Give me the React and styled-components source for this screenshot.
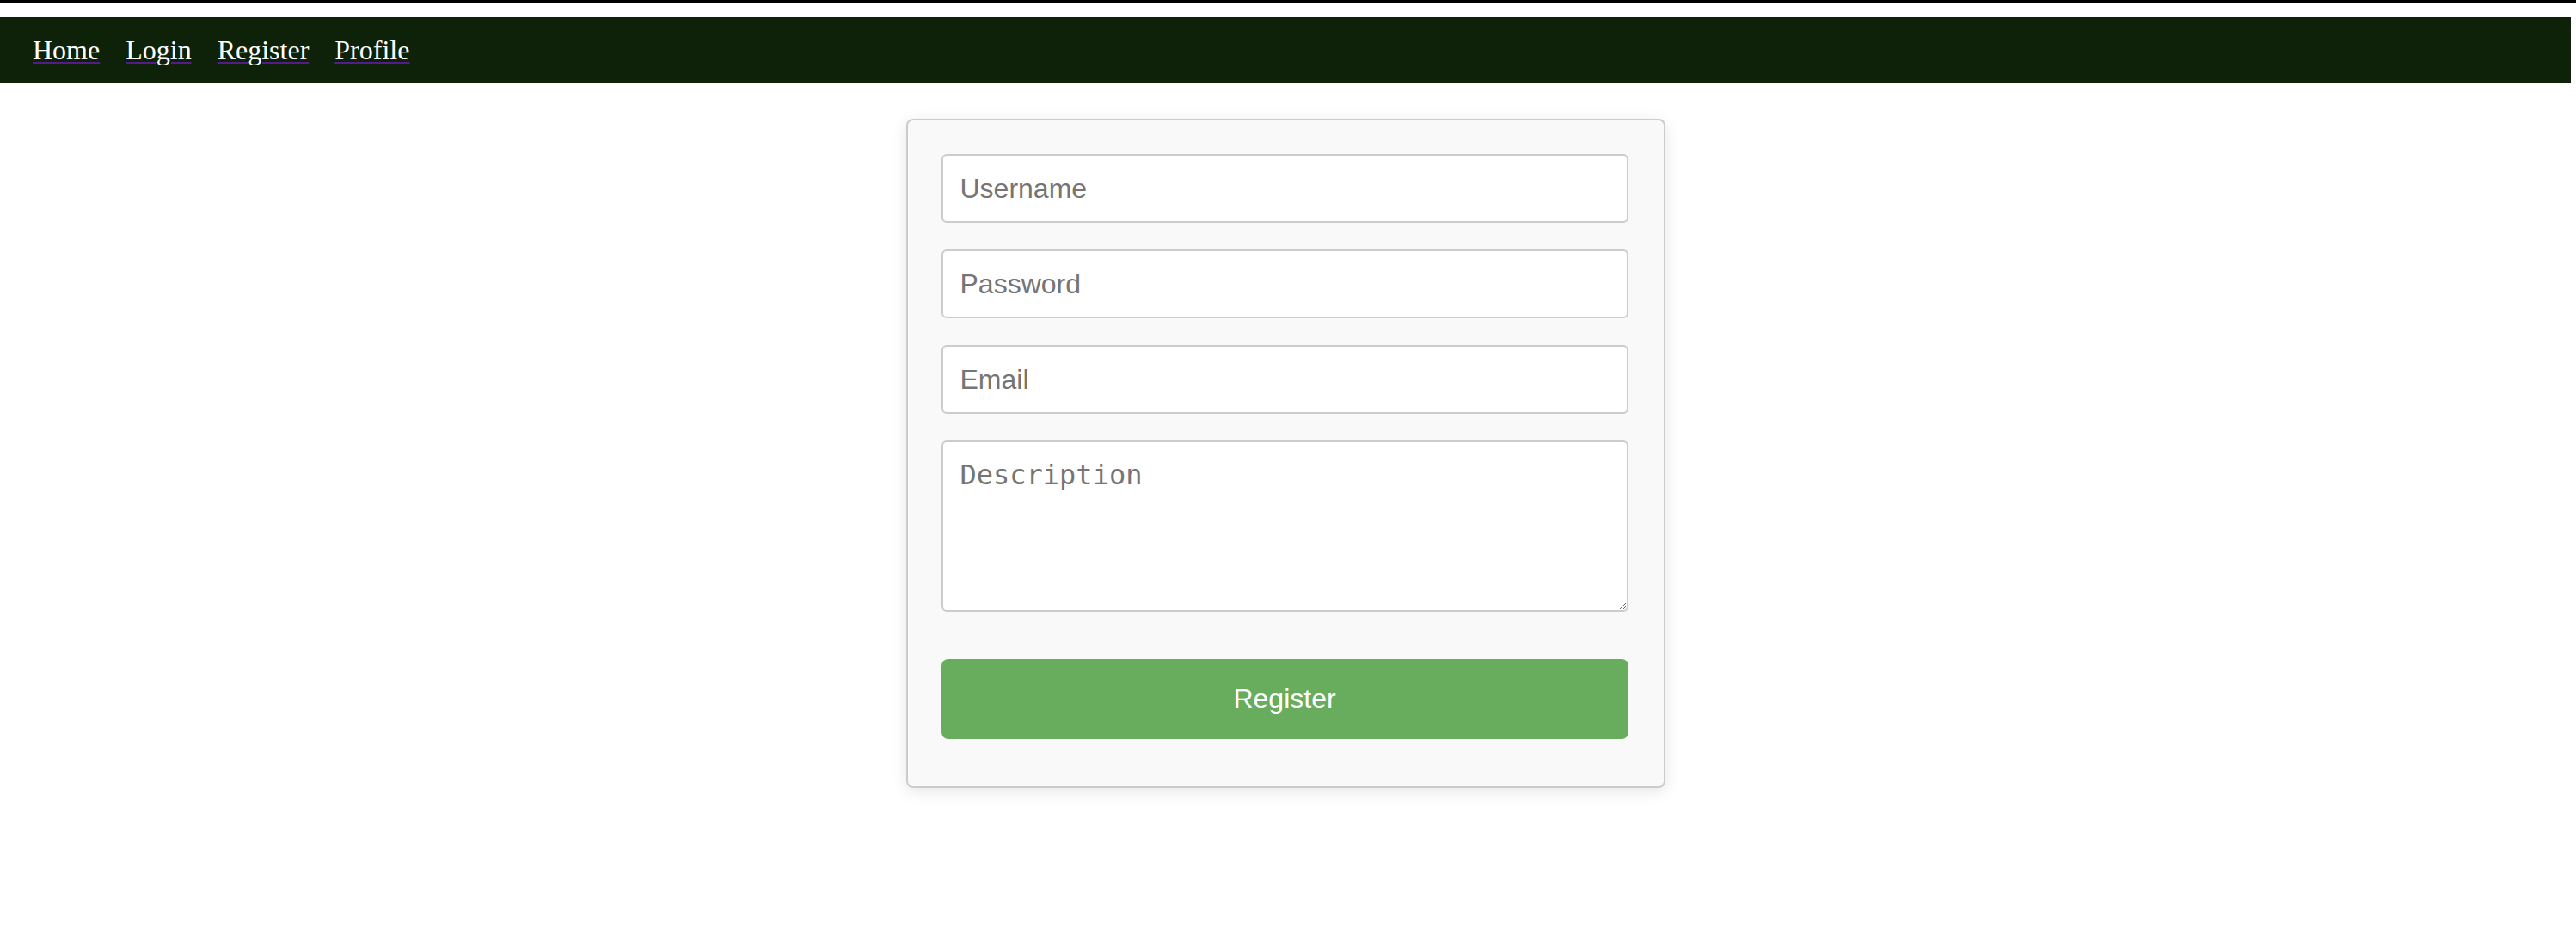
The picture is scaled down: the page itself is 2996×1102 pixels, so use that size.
import React from "react";
import styled, { createGlobalStyle } from "styled-components";

const GlobalStyle = createGlobalStyle`
  html, body { margin: 0; padding: 0; background: #ffffff; }
  body { font-family: "Liberation Serif", "Times New Roman", serif; }
`;

const Page = styled.div`
  width: 2996px;
  min-height: 1102px;
  background: #ffffff;
`;

const TopRule = styled.div`
  height: 4px;
  background: #000000;
`;

const NavBar = styled.nav`
  margin-top: 16px;
  width: 2990px;
  height: 77px;
  box-sizing: border-box;
  background: #0d2209;
  display: flex;
  align-items: center;
  gap: 30px;
  padding-left: 38px;
`;

const NavLink = styled.a`
  font-family: "Liberation Serif", "Times New Roman", serif;
  font-size: 32px;
  color: #ffffff;
  text-decoration: underline;
  text-decoration-color: #551a8b;
  text-decoration-thickness: 2px;
  text-underline-offset: 3px;
  cursor: pointer;
`;

const Main = styled.main`
  width: 2990px;
  display: flex;
  justify-content: center;
  padding-top: 41px;
`;

const Card = styled.div`
  width: 883px;
  box-sizing: border-box;
  background: #f9f9f9;
  border: 2px solid #cccccc;
  border-radius: 8px;
  padding: 39px 41px 55px 39px;
  box-shadow: 0 4px 18px rgba(0, 0, 0, 0.1);
`;

const Form = styled.form`
  display: flex;
  flex-direction: column;
  gap: 31px;
  margin: 0;
`;

const fieldBase = `
  width: 100%;
  box-sizing: border-box;
  border: 2px solid #cccccc;
  border-radius: 6px;
  background: #ffffff;
  padding: 0 20px;
  margin: 0;
  font-size: 32px;
  color: #333333;
  outline: none;
  &::placeholder { color: #757575; opacity: 1; }
`;

const TextInput = styled.input`
  ${fieldBase}
  height: 80px;
  font-family: "Liberation Sans", Arial, sans-serif;
`;

const TextArea = styled.textarea`
  ${fieldBase}
  height: 199px;
  padding: 19px 20px;
  font-family: "DejaVu Sans Mono", monospace;
  resize: both;
  display: block;
`;

const SubmitButton = styled.button`
  margin-top: 24px;
  height: 93px;
  width: 100%;
  border: none;
  border-radius: 8px;
  background: #68ad5d;
  color: #ffffff;
  font-family: "Liberation Sans", Arial, sans-serif;
  font-size: 32px;
  cursor: pointer;
`;

export default function App() {
  const links = ["Home", "Login", "Register", "Profile"];
  return (
    <Page>
      <GlobalStyle />
      <TopRule />
      <NavBar>
        {links.map((l) => (
          <NavLink key={l} href="#">
            {l}
          </NavLink>
        ))}
      </NavBar>
      <Main>
        <Card>
          <Form onSubmit={(e) => e.preventDefault()}>
            <TextInput type="text" placeholder="Username" />
            <TextInput type="password" placeholder="Password" />
            <TextInput type="email" placeholder="Email" />
            <TextArea placeholder="Description" />
            <SubmitButton type="submit">Register</SubmitButton>
          </Form>
        </Card>
      </Main>
    </Page>
  );
}
